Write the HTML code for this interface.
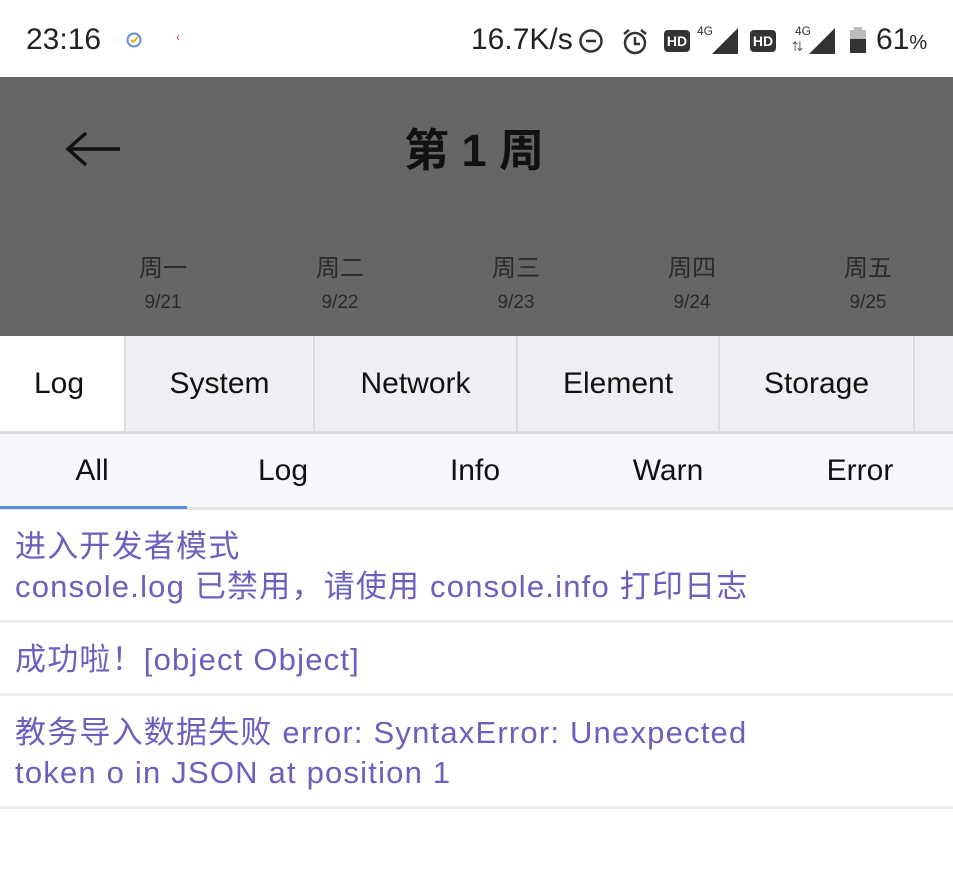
<!DOCTYPE html>
<html><head><meta charset="utf-8"><style>
*{margin:0;padding:0;box-sizing:border-box}
body{width:953px;height:883px;background:#fff;position:relative;overflow:hidden;font-family:"Liberation Sans","Noto Sans CJK SC",sans-serif}
.a{position:absolute;white-space:nowrap}
.sb{color:#222;font-size:30px;top:23px}
.hd{position:absolute;background:#333;color:#fff;font-size:14px;font-weight:bold;border-radius:4px;width:26px;height:22px;top:30px;text-align:center;line-height:22px}
.tab{position:absolute;top:336px;height:96px;background:#efeff3;border-right:2px solid #dcdcdc;font-size:30px;color:#111;text-align:center;line-height:96px}
.f{position:absolute;top:454px;font-size:30px;color:#111;text-align:center;width:192px}
.log{position:absolute;left:15px;color:#6a60bd;font-size:31px;line-height:40px;letter-spacing:1.2px}
.sep{position:absolute;left:0;width:953px;height:3px;background:#ededed}
.day{position:absolute;color:#2a2a2a;text-align:center;width:80px}
</style></head><body>
<div class="a sb" style="left:26px">23:16</div>
<svg class="a" style="left:125px;top:31px" width="18" height="18"><circle cx="9" cy="9" r="6.5" fill="none" stroke="#5b8fd8" stroke-width="2"/><path d="M6 9l2 2 5-5" stroke="#f0b020" stroke-width="2" fill="none"/></svg>
<div class="a" style="left:176px;top:30px;color:#b04060;font-size:12px">&#8249;</div>
<div class="a sb" style="left:471px">16.7K/s</div>
<svg class="a" style="left:578px;top:28px" width="26" height="26"><circle cx="13" cy="13" r="10.5" fill="none" stroke="#333" stroke-width="2.5"/><path d="M8 13h10" stroke="#333" stroke-width="2.5"/></svg>
<svg class="a" style="left:619px;top:25px" width="32" height="32"><circle cx="16" cy="18" r="10" fill="none" stroke="#333" stroke-width="2.5"/><path d="M16 12v7h5M5 9l5-4M27 9l-5-4" stroke="#333" stroke-width="2.5" fill="none"/></svg>
<div class="hd" style="left:664px">HD</div>
<div class="a" style="left:697px;top:24px;font-size:12px;color:#333">4G</div>
<svg class="a" style="left:712px;top:28px" width="26" height="26"><path d="M26 0V26H0Z" fill="#333"/></svg>
<div class="hd" style="left:750px">HD</div>
<div class="a" style="left:795px;top:24px;font-size:12px;color:#333">4G</div>
<div class="a" style="left:792px;top:38px;font-size:11px;color:#333">⇅</div>
<svg class="a" style="left:809px;top:28px" width="26" height="26"><path d="M26 0V26H0Z" fill="#333"/></svg>
<svg class="a" style="left:850px;top:27px" width="16" height="26"><rect x="4" y="0" width="8" height="3" fill="#bbb"/><rect x="0" y="3" width="16" height="23" rx="1" fill="#bbb"/><rect x="0" y="12" width="16" height="14" fill="#333"/></svg>
<div class="a sb" style="left:876px">61<span style="font-size:20px">%</span></div>

<div class="a" style="left:0;top:77px;width:953px;height:259px;background:#666"></div>
<svg class="a" style="left:64px;top:130px" width="60" height="40"><path d="M4 19H56M22 3L4 19L22 35" stroke="#111" stroke-width="3.5" fill="none"/></svg>
<div class="a" style="left:404px;top:114px;font-size:45px;font-weight:bold;color:#111">第 1 周</div>
<div class="day" style="left:123px;top:248px;font-size:24px">周一</div><div class="day" style="left:123px;top:292px;font-size:19px">9/21</div>
<div class="day" style="left:300px;top:248px;font-size:24px">周二</div><div class="day" style="left:300px;top:292px;font-size:19px">9/22</div>
<div class="day" style="left:476px;top:248px;font-size:24px">周三</div><div class="day" style="left:476px;top:292px;font-size:19px">9/23</div>
<div class="day" style="left:652px;top:248px;font-size:24px">周四</div><div class="day" style="left:652px;top:292px;font-size:19px">9/24</div>
<div class="day" style="left:828px;top:248px;font-size:24px">周五</div><div class="day" style="left:828px;top:292px;font-size:19px">9/25</div>

<div class="tab" style="left:0;width:126px;background:#fff;text-indent:-6px">Log</div>
<div class="tab" style="left:126px;width:189px">System</div>
<div class="tab" style="left:315px;width:203px">Network</div>
<div class="tab" style="left:518px;width:202px">Element</div>
<div class="tab" style="left:720px;width:195px">Storage</div>
<div class="tab" style="left:915px;width:40px;border:none"></div>
<div class="a" style="left:0;top:431px;width:953px;height:3px;background:#dedede"></div>
<div class="a" style="left:0;top:434px;width:953px;height:73px;background:#f8f7fc"></div>
<div class="f" style="left:-4px">All</div>
<div class="f" style="left:187px">Log</div>
<div class="f" style="left:379px">Info</div>
<div class="f" style="left:572px">Warn</div>
<div class="f" style="left:764px">Error</div>
<div class="a" style="left:0;top:507px;width:953px;height:3px;background:#e4e4e4"></div>
<div class="a" style="left:0;top:506px;width:187px;height:3px;background:#5a8fdc"></div>

<div class="log" style="top:527px">进入开发者模式<br>console.log 已禁用，请使用 console.info 打印日志</div>
<div class="sep" style="top:620px"></div>
<div class="log" style="top:640px">成功啦！[object Object]</div>
<div class="sep" style="top:693px"></div>
<div class="log" style="top:713px">教务导入数据失败 error: SyntaxError: Unexpected<br>token o in JSON at position 1</div>
<div class="sep" style="top:806px"></div>
</body></html>
